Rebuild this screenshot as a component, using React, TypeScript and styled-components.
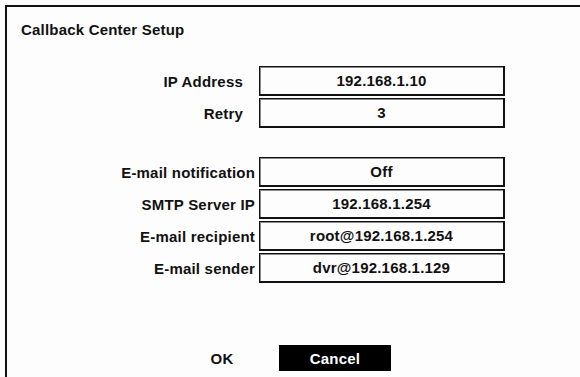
import styled, { createGlobalStyle } from "styled-components";

const GlobalStyle = createGlobalStyle`
  html, body {
    margin: 0;
    padding: 0;
    background: #fdfdfd;
  }
  body {
    font-family: "Liberation Sans", Arial, sans-serif;
    color: #111;
    letter-spacing: 0.2px;
  }
`

const Frame = styled.div`
  margin: 5px 0 0 5px;
  height: 372px;
  box-sizing: border-box;
  border-left: 2px solid #111;
  border-top: 2px solid #111;
  display: flex;
  flex-direction: column;
`

const Title = styled.div`
  padding: 14px 0 0 14px;
  font-size: 15px;
  font-weight: bold;
  line-height: 18px;
`

const Group = styled.div<{ $top: number }>`
  margin-top: ${p => p.$top}px;
  display: flex;
  flex-direction: column;
  gap: 2px;
`

const Row = styled.div`
  display: grid;
  grid-template-columns: 252px 246px;
  height: 30px;
`

const Label = styled.div<{ $pad: number }>`
  display: flex;
  align-items: center;
  justify-content: flex-end;
  padding-right: ${p => p.$pad}px;
  font-size: 15px;
  font-weight: bold;
`

const Value = styled.div`
  display: flex;
  align-items: center;
  justify-content: center;
  box-sizing: border-box;
  border: 1px solid #111;
  border-right-width: 2px;
  border-bottom-width: 2px;
  box-shadow: inset 1px 1px 0 #8a8a8a;
  font-size: 15px;
  font-weight: bold;
  background: #fdfdfd;
`

const Buttons = styled.div`
  margin-top: 62px;
  padding-left: 159px;
  display: flex;
  gap: 1px;
`

const Button = styled.div<{ $active?: boolean }>`
  width: 112px;
  height: 26px;
  display: flex;
  align-items: center;
  justify-content: center;
  font-size: 15px;
  font-weight: bold;
  background: ${p => (p.$active ? "#000" : "transparent")};
  color: ${p => (p.$active ? "#fff" : "#111")};
`

interface IField {
  label: string
  value: string
}

const network: IField[] = [
  { label: "IP Address", value: "192.168.1.10" },
  { label: "Retry", value: "3" },
]

const mail: IField[] = [
  { label: "E-mail notification", value: "Off" },
  { label: "SMTP Server IP", value: "192.168.1.254" },
  { label: "E-mail recipient", value: "root@192.168.1.254" },
  { label: "E-mail sender", value: "dvr@192.168.1.129" },
]

const App = () => {
  return (
    <>
      <GlobalStyle />
      <Frame>
        <Title>Callback Center Setup</Title>
        <Group $top={27}>
          {network.map(f => (
            <Row key={f.label}>
              <Label $pad={16}>{f.label}</Label>
              <Value>{f.value}</Value>
            </Row>
          ))}
        </Group>
        <Group $top={29}>
          {mail.map(f => (
            <Row key={f.label}>
              <Label $pad={4}>{f.label}</Label>
              <Value>{f.value}</Value>
            </Row>
          ))}
        </Group>
        <Buttons>
          <Button>OK</Button>
          <Button $active>Cancel</Button>
        </Buttons>
      </Frame>
    </>
  );
}

export default App;
